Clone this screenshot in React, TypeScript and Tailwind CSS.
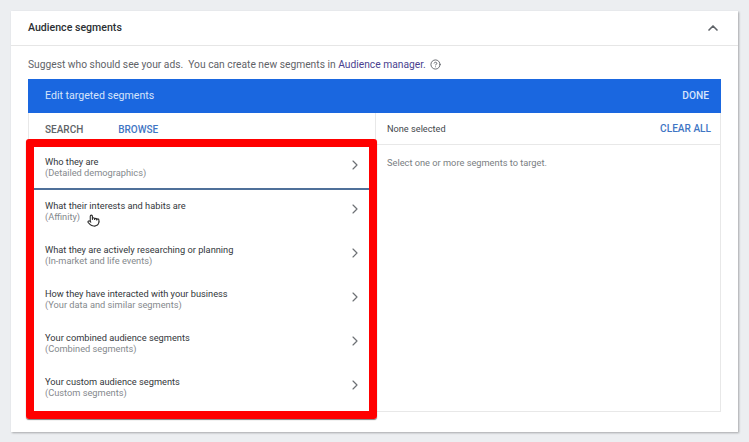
import { ChevronRight, ChevronUp, CircleHelp, Pointer } from "lucide-react"

const segments = [
  { title: "Who they are", sub: "(Detailed demographics)" },
  { title: "What their interests and habits are", sub: "(Affinity)" },
  { title: "What they are actively researching or planning", sub: "(In-market and life events)" },
  { title: "How they have interacted with your business", sub: "(Your data and similar segments)" },
  { title: "Your combined audience segments", sub: "(Combined segments)" },
  { title: "Your custom audience segments", sub: "(Custom segments)" },
]

export default function App() {
  return (
    <div className="relative h-[442px] w-[749px] overflow-hidden bg-[#eceef1] px-[11px] pt-[11px] font-['Roboto',sans-serif]">
      <div className="h-[421px] w-[727px] bg-white shadow-[1px_1px_2px_rgba(0,0,0,0.3)]">
        <div className="flex h-[35px] items-center justify-between border-b border-[#e6e6e6] pl-[17px] pr-[17px]">
          <span className="text-[10.6px] font-medium text-[#2b2f33]">Audience segments</span>
          <ChevronUp className="h-4 w-4 text-[#5f6368]" strokeWidth={2.5} />
        </div>

        <div className="px-[17px]">
          <div className="flex h-[33px] items-center pt-[4px] text-[10.25px] text-[#5f6368]">
            <span className="whitespace-pre">Suggest who should see your ads.  You can create new segments in </span>
            <span className="text-[#4a3f8f]">Audience manager.</span>
            <CircleHelp className="ml-[4px] h-[11px] w-[11px]" />
          </div>

          <div className="flex h-[34px] items-center justify-between bg-[#1a67e0] pl-[17px] pr-[12px] text-[10.2px] text-[#d6e4fb]">
            <span className="text-[10.6px]">Edit targeted segments</span>
            <span className="font-medium">DONE</span>
          </div>

          <div className="grid h-[299px] grid-cols-[347px_1fr] border-x border-b border-[#e8e8e8]">
            <div className="border-r border-[#e8e8e8]">
              <div className="flex h-[32px] items-center gap-[35px] border-b border-[#e8e8e8] pl-[16px] pt-[1px] text-[10px] font-medium">
                <span className="text-[#5f6368]">SEARCH</span>
                <span className="text-[#3f76c4]">BROWSE</span>
              </div>
              <div className="pl-[5px] pr-[4px] pt-[1px]">
                {segments.map((s, i) => (
                  <div
                    key={s.title}
                    className={`flex h-[44px] items-start justify-between pl-[11px] pr-[8px] pt-[10px] ${i === 0 ? "border-b-2 border-[#4f7099]" : ""}`}
                  >
                    <div className="flex flex-col text-[9.25px] leading-[11px]">
                      <span className="text-[#33373b]">{s.title}</span>
                      <span className="text-[#85898d]">{s.sub}</span>
                    </div>
                    <ChevronRight className="mt-[1px] h-4 w-4 text-[#6d7175]" strokeWidth={1.75} />
                  </div>
                ))}
              </div>
            </div>

            <div>
              <div className="flex h-[32px] items-center justify-between border-b border-[#e8e8e8] pl-[11px] pr-[9px]">
                <span className="text-[9.2px] text-[#44484c]">None selected</span>
                <span className="text-[10.1px] font-medium text-[#3f76c4]">CLEAR ALL</span>
              </div>
              <p className="pl-[11px] pt-[12px] text-[9.25px] leading-[11px] text-[#7a7e82]">
                Select one or more segments to target.
              </p>
            </div>
          </div>
        </div>
      </div>

      {/* red highlight over the list */}
      <div className="pointer-events-none absolute left-[26px] top-[139px] h-[280px] w-[351px] rounded-[3px] border-[8px] border-[#ff0000] shadow-[0_1px_1px_rgba(0,0,0,0.5)]" />

      {/* mouse cursor */}
      <Pointer className="absolute left-[87px] top-[213px] h-[15px] w-[13px] fill-white text-[#2b2b2b]" strokeWidth={2} />
    </div>
  )
}
